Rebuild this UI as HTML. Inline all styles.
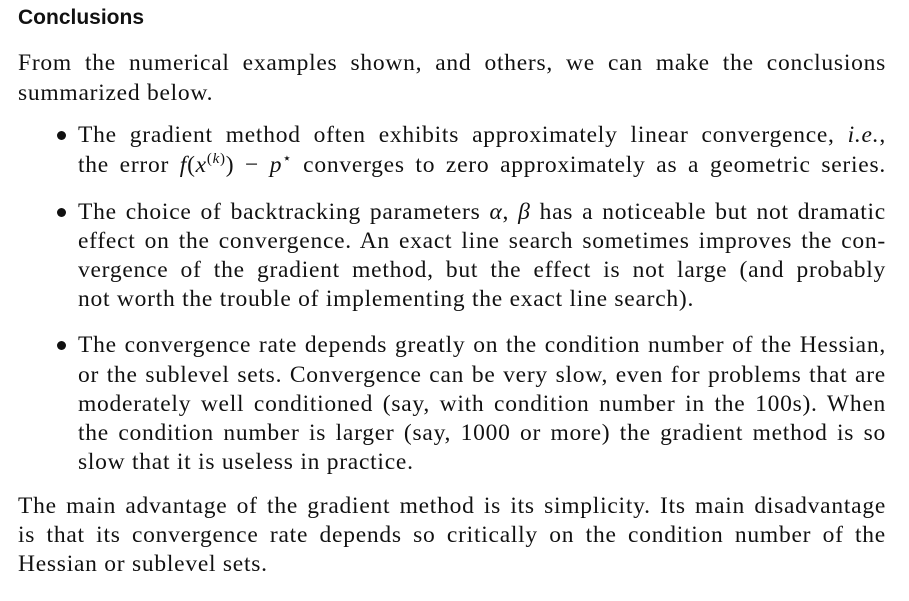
<!DOCTYPE html>
<html><head><meta charset="utf-8"><style>
body{margin:0;width:909px;height:601px;background:#fff;position:relative;overflow:hidden;font-family:"Liberation Serif",serif;color:#111;}
h1{position:absolute;left:18px;top:6px;margin:0;font:bold 21px "Liberation Sans",sans-serif;}
.l{position:absolute;height:30px;line-height:30px;font-size:23.5px;letter-spacing:0.75px;white-space:nowrap;text-align:justify;text-align-last:justify;}
.f{left:18px;width:868px}
.b{left:78px;width:808px}
.e{text-align-last:left}
.d{position:absolute;left:57px;width:9px;height:9px;border-radius:50%;background:#111}
i{font-style:italic}
sup{font-size:15px;line-height:0;vertical-align:9px}
</style></head><body>
<h1>Conclusions</h1>
<div class="l f" style="top:48px">From the numerical examples shown, and others, we can make the conclusions</div>
<div class="l f e" style="top:78px">summarized below.</div>

<div class="d" style="top:131px"></div>
<div class="l b" style="top:120px">The gradient method often exhibits approximately linear convergence, <i>i.e.</i>,</div>
<div class="l b" style="top:150px">the error <i>f</i>(<i>x</i><sup>(<i>k</i>)</sup>) − <i>p</i><sup>⋆</sup> converges to zero approximately as a geometric series.</div>

<div class="d" style="top:208px"></div>
<div class="l b" style="top:197px">The choice of backtracking parameters <i>α</i>, <i>β</i> has a noticeable but not dramatic</div>
<div class="l b" style="top:226px">effect on the convergence. An exact line search sometimes improves the con-</div>
<div class="l b" style="top:255px">vergence of the gradient method, but the effect is not large (and probably</div>
<div class="l b e" style="top:284px">not worth the trouble of implementing the exact line search).</div>

<div class="d" style="top:341px"></div>
<div class="l b" style="top:330px">The convergence rate depends greatly on the condition number of the Hessian,</div>
<div class="l b" style="top:360px">or the sublevel sets. Convergence can be very slow, even for problems that are</div>
<div class="l b" style="top:389px">moderately well conditioned (say, with condition number in the 100s). When</div>
<div class="l b" style="top:418px">the condition number is larger (say, 1000 or more) the gradient method is so</div>
<div class="l b e" style="top:447px">slow that it is useless in practice.</div>

<div class="l f" style="top:491px">The main advantage of the gradient method is its simplicity. Its main disadvantage</div>
<div class="l f" style="top:520px">is that its convergence rate depends so critically on the condition number of the</div>
<div class="l f e" style="top:549px">Hessian or sublevel sets.</div>
</body></html>
